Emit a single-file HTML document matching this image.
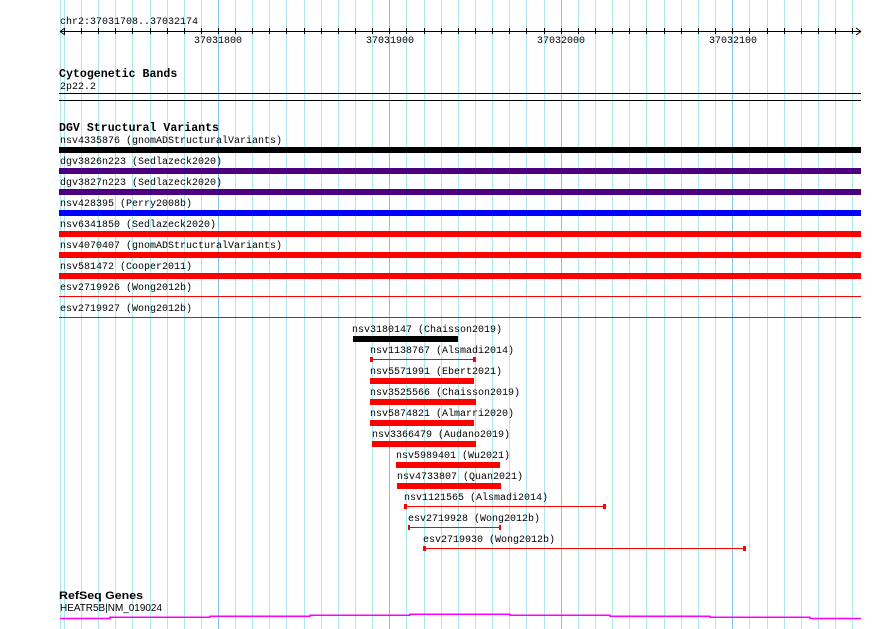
<!DOCTYPE html>
<html><head><meta charset="utf-8"><style>
html,body{margin:0;padding:0;background:#fff;width:890px;height:629px;overflow:hidden}
svg{display:block}
text{font-family:"Liberation Mono",monospace;font-size:10px;fill:#000}
.b{font-weight:bold;font-size:11.6px}
</style></head><body>
<svg width="890" height="629" xmlns="http://www.w3.org/2000/svg">
<path stroke="#aee8ef" stroke-width="1" fill="none" d="M60.5 0V629M64.5 0V629M81.5 0V629M98.5 0V629M115.5 0V629M132.5 0V629M150.5 0V629M167.5 0V629M184.5 0V629M201.5 0V629M235.5 0V629M252.5 0V629M269.5 0V629M286.5 0V629M304.5 0V629M321.5 0V629M338.5 0V629M355.5 0V629M372.5 0V629M406.5 0V629M424.5 0V629M441.5 0V629M458.5 0V629M475.5 0V629M492.5 0V629M509.5 0V629M526.5 0V629M544.5 0V629M578.5 0V629M595.5 0V629M612.5 0V629M629.5 0V629M646.5 0V629M664.5 0V629M681.5 0V629M698.5 0V629M715.5 0V629M749.5 0V629M767.5 0V629M784.5 0V629M801.5 0V629M818.5 0V629M835.5 0V629M852.5 0V629"/>
<path stroke="#84c6ea" stroke-width="1" fill="none" d="M218.5 0V629M389.5 0V629M561.5 0V629M732.5 0V629"/>

<text x="60" y="24">chr2:37031708..37032174</text>
<path stroke="#000" stroke-width="1" fill="none" d="M60 31.5H861M60 31.5L65 28M60 31.5L65 35M861 31.5L856 28M861 31.5L856 35"/>
<path stroke="#000" stroke-width="1" fill="none" d="M64.5 28V34M81.5 28V34M98.5 28V34M115.5 28V34M132.5 28V34M150.5 28V34M167.5 28V34M184.5 28V34M201.5 28V34M218.5 28V34M235.5 28V34M252.5 28V34M269.5 28V34M286.5 28V34M304.5 28V34M321.5 28V34M338.5 28V34M355.5 28V34M372.5 28V34M389.5 28V34M406.5 28V34M424.5 28V34M441.5 28V34M458.5 28V34M475.5 28V34M492.5 28V34M509.5 28V34M526.5 28V34M544.5 28V34M561.5 28V34M578.5 28V34M595.5 28V34M612.5 28V34M629.5 28V34M646.5 28V34M664.5 28V34M681.5 28V34M698.5 28V34M715.5 28V34M732.5 28V34M749.5 28V34M767.5 28V34M784.5 28V34M801.5 28V34M818.5 28V34M835.5 28V34M852.5 28V34"/>
<text x="218" y="43" text-anchor="middle">37031800</text>
<text x="390" y="43" text-anchor="middle">37031900</text>
<text x="561" y="43" text-anchor="middle">37032000</text>
<text x="733" y="43" text-anchor="middle">37032100</text>

<text class="b" x="59" y="77">Cytogenetic Bands</text>
<text x="60" y="89">2p22.2</text>
<rect x="59" y="93" width="802" height="1" fill="#000"/>
<rect x="59" y="100" width="802" height="1" fill="#000"/>

<text class="b" x="59" y="131">DGV Structural Variants</text>
<text x="60" y="143">nsv4335876 (gnomADStructuralVariants)</text>
<rect x="59" y="147" width="802" height="6" fill="#000"/>
<text x="60" y="164">dgv3826n223 (Sedlazeck2020)</text>
<rect x="59" y="168" width="802" height="6" fill="#4b0082"/>
<text x="60" y="185">dgv3827n223 (Sedlazeck2020)</text>
<rect x="59" y="189" width="802" height="6" fill="#4b0082"/>
<text x="60" y="206">nsv428395 (Perry2008b)</text>
<rect x="59" y="210" width="802" height="6" fill="#0000ff"/>
<text x="60" y="227">nsv6341850 (Sedlazeck2020)</text>
<rect x="59" y="231" width="802" height="6" fill="#ff0000"/>
<text x="60" y="248">nsv4070407 (gnomADStructuralVariants)</text>
<rect x="59" y="252" width="802" height="6" fill="#ff0000"/>
<text x="60" y="269">nsv581472 (Cooper2011)</text>
<rect x="59" y="273" width="802" height="6" fill="#ff0000"/>
<text x="60" y="290">esv2719926 (Wong2012b)</text>
<rect x="59" y="296" width="802" height="1" fill="#ff0000"/>
<text x="60" y="311">esv2719927 (Wong2012b)</text>
<rect x="59" y="317" width="802" height="1" fill="#ff0000"/>

<text x="352" y="332">nsv3180147 (Chaisson2019)</text>
<rect x="353" y="336" width="105" height="6" fill="#000"/>
<text x="370" y="353">nsv1138767 (Alsmadi2014)</text>
<rect x="370" y="359" width="105" height="1" fill="#f00"/><rect x="370" y="357" width="3" height="5" fill="#f00"/><rect x="473" y="357" width="3" height="5" fill="#f00"/>
<text x="370" y="374">nsv5571991 (Ebert2021)</text>
<rect x="370" y="378" width="104" height="6" fill="#f00"/>
<text x="370" y="395">nsv3525566 (Chaisson2019)</text>
<rect x="370" y="399" width="106" height="6" fill="#f00"/>
<text x="370" y="416">nsv5874821 (Almarri2020)</text>
<rect x="370" y="420" width="104" height="6" fill="#f00"/>
<text x="372" y="437">nsv3366479 (Audano2019)</text>
<rect x="372" y="441" width="104" height="6" fill="#f00"/>
<text x="396" y="458">nsv5989401 (Wu2021)</text>
<rect x="396" y="462" width="104" height="6" fill="#f00"/>
<text x="397" y="479">nsv4733807 (Quan2021)</text>
<rect x="397" y="483" width="104" height="6" fill="#f00"/>
<text x="404" y="500">nsv1121565 (Alsmadi2014)</text>
<rect x="405" y="506" width="200" height="1" fill="#f00"/><rect x="404" y="504" width="3" height="5" fill="#f00"/><rect x="603" y="504" width="3" height="5" fill="#f00"/>
<text x="408" y="521">esv2719928 (Wong2012b)</text>
<rect x="409" y="527" width="92" height="1" fill="#f00"/><rect x="408" y="525" width="2" height="5" fill="#f00"/><rect x="499" y="525" width="2" height="5" fill="#f00"/>
<text x="423" y="542">esv2719930 (Wong2012b)</text>
<rect x="424" y="548" width="321" height="1" fill="#f00"/><rect x="423" y="546" width="3" height="5" fill="#f00"/><rect x="743" y="546" width="3" height="5" fill="#f00"/>

<text x="59" y="599" style="font-family:'Liberation Sans',sans-serif;font-weight:bold;font-size:11px" textLength="84" lengthAdjust="spacingAndGlyphs">RefSeq Genes</text>
<text x="60" y="611" style="font-family:'Liberation Sans',sans-serif;font-size:10px" textLength="102" lengthAdjust="spacingAndGlyphs">HEATR5B|NM_019024</text>
<path stroke="#ff00ff" stroke-width="1.5" fill="none" d="M60 618.5H110V617.3H210V616.3H310V615.3H410V614.3H510V615.3H610V616.3H710V617.3H810V618.5H861"/>
</svg>
</body></html>
